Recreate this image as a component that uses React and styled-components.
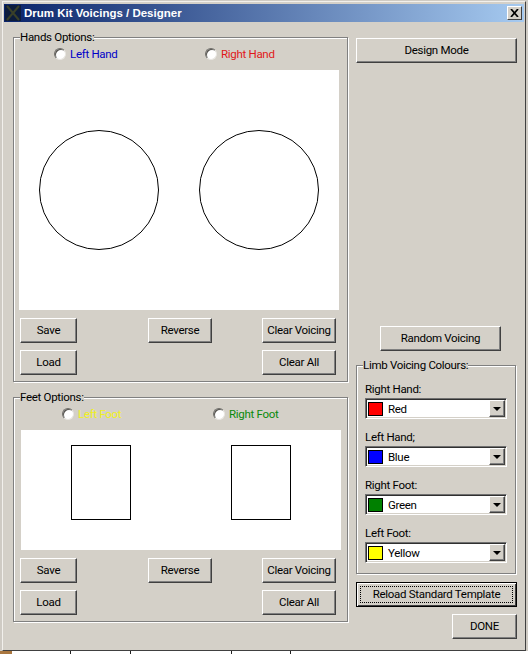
import React from 'react';
import styled, { createGlobalStyle } from 'styled-components';

const GlobalStyle = createGlobalStyle`
  html, body {
    margin: 0;
    padding: 0;
    background: #d4d0c8;
  }
  body {
    font-family: Roboto, "Liberation Sans", Arial, sans-serif;
    font-size: 11.5px;
    letter-spacing: -0.3px;
    color: #000;
  }
`;

const Page = styled.div`
  width: 528px;
  height: 654px;
  overflow: hidden;
  background: #cfcbc4;
  padding-top: 1px;
  box-sizing: border-box;
`;

const Window = styled.div`
  width: 524px;
  height: 650px;
  margin-left: 2px;
  box-sizing: border-box;
  padding: 2px 1px;
  background: #d4d0c8;
  border: 1px solid;
  border-color: #f2f0ec #404040 #404040 #f2f0ec;
`;

const TitleBar = styled.div`
  height: 18px;
  display: flex;
  align-items: center;
  background: linear-gradient(90deg, #0a246a, #a6caf0);
  color: #fff;
  font-family: "Liberation Sans", Arial, sans-serif;
  font-weight: bold;
  font-size: 11.5px;
  letter-spacing: 0;
`;

const TitleIcon = styled.svg`
  width: 16px;
  height: 16px;
  margin: 0 3px 0 1px;
  flex: none;
`;

const TitleText = styled.span`
  flex: 1;
`;

const CloseBox = styled.div`
  width: 15px;
  height: 14px;
  margin-right: 2px;
  background: #d4d0c8;
  box-sizing: border-box;
  border: 1px solid;
  border-color: #fff #404040 #404040 #fff;
  display: flex;
  align-items: center;
  justify-content: center;
`;

const Body = styled.div`
  display: flex;
  gap: 8px;
  padding: 8px 0 0 9px;
`;

const LeftColumn = styled.div`
  width: 335px;
  display: flex;
  flex-direction: column;
  gap: 8px;
`;

const RightColumn = styled.div`
  width: 161px;
  display: flex;
  flex-direction: column;
  align-items: flex-start;
`;

const Group = styled.fieldset`
  margin: 0;
  padding: 0 0 ${p => p.$bottom ?? 6}px;
  min-width: 0;
  width: ${p => p.$width || '335px'};
  box-sizing: border-box;
  border: 1px solid #808080;
  box-shadow: inset 1px 1px 0 #fff, 1px 1px 0 #fff;
`;

const GroupTitle = styled.legend`
  margin-left: 6px;
  padding: 0;
  height: 14px;
  line-height: 14px;
  background: #d4d0c8;
`;

const RadioRow = styled.div`
  height: 26px;
  display: flex;
  align-items: flex-start;
  padding: 3px 0 0 ${p => p.$indent}px;
  box-sizing: border-box;
`;

const RadioOption = styled.label`
  flex: none;
  width: 151px;
  display: flex;
  align-items: center;
  gap: 4px;
  line-height: 14px;
  color: ${p => p.$color};
`;

const RadioDot = styled.input.attrs({ type: 'radio' })`
  appearance: none;
  margin: 0;
  width: 12px;
  height: 12px;
  border-radius: 50%;
  background: #fff;
  border: 1px solid;
  border-color: #6e6c68 #e8e6e2 #e8e6e2 #6e6c68;
  box-shadow: inset 1px 1px 0 #55534f;
  box-sizing: border-box;
`;

const Canvas = styled.svg`
  display: block;
  background: #fff;
  margin-left: ${p => p.$indent}px;
`;

const ButtonGrid = styled.div`
  display: grid;
  grid-template-columns: 128px 114px 74px;
  row-gap: 7px;
  margin: 8px 0 0 6px;
`;

const Button = styled.button`
  appearance: none;
  width: ${p => p.$width}px;
  height: 25px;
  padding: 0 0 2px;
  margin: ${p => p.$margin || 0};
  font: inherit;
  letter-spacing: inherit;
  color: #000;
  background: #d4d0c8;
  box-sizing: border-box;
  border: 1px solid;
  border-color: #fff #404040 #404040 #fff;
  box-shadow: inset -1px -1px 0 #808080;
  ${p => p.$column ? `grid-column: ${p.$column};` : ''}
`;

const DefaultButton = styled(Button)`
  position: relative;
  border: 1px solid #000;
  box-shadow: inset 1px 1px 0 #fff, inset -1px -1px 0 #404040;
  &::after {
    content: '';
    position: absolute;
    inset: 3px;
    border: 1px dotted #000;
  }
`;

const Field = styled.div`
  padding: 0 0 0 8px;
  margin-bottom: 1px;
`;

const FieldLabel = styled.div`
  height: 26px;
  padding-top: 10px;
  box-sizing: border-box;
  line-height: 14px;
`;

const Combo = styled.div`
  width: 142px;
  height: 21px;
  box-sizing: border-box;
  display: flex;
  align-items: center;
  background: #fff;
  border: 1px solid;
  border-color: #707070 #fff #fff #707070;
  box-shadow: inset 1px 1px 0 #303030, inset -1px -1px 0 #d4d0c8;
`;

const Swatch = styled.span`
  width: 15px;
  height: 14px;
  margin: 0 5px 0 2px;
  box-sizing: border-box;
  border: 1px solid #000;
  background: ${p => p.$color};
`;

const ComboText = styled.span`
  flex: 1;
`;

const ComboArrow = styled.span`
  width: 16px;
  height: 17px;
  margin-right: 1px;
  box-sizing: border-box;
  background: #d4d0c8;
  border: 1px solid;
  border-color: #fff #404040 #404040 #fff;
  box-shadow: inset -1px -1px 0 #808080;
  display: flex;
  align-items: center;
  justify-content: center;
  &::before {
    content: '';
    border-style: solid;
    border-width: 4px 4px 0;
    border-color: #000 transparent transparent;
  }
`;

const BottomStrip = styled.div`
  height: 3px;
  background:
    linear-gradient(#222, #222) 70px 0 / 1px 3px no-repeat,
    linear-gradient(#222, #222) 130px 0 / 1px 3px no-repeat,
    linear-gradient(#222, #222) 231px 0 / 1px 3px no-repeat,
    linear-gradient(#222, #222) 290px 0 / 1px 3px no-repeat,
    linear-gradient(#a9763f, #a9763f) 0 0 / 12px 3px no-repeat,
    #fff;
`;

function LimbCombo({ label, name, color }) {
  return (
    <Field>
      <FieldLabel>{label}</FieldLabel>
      <Combo>
        <Swatch $color={color} />
        <ComboText>{name}</ComboText>
        <ComboArrow />
      </Combo>
    </Field>
  );
}

function VoicingButtons() {
  return (
    <ButtonGrid>
      <Button $width={57}>Save</Button>
      <Button $width={64}>Reverse</Button>
      <Button $width={74}>Clear Voicing</Button>
      <Button $width={57}>Load</Button>
      <Button $width={74} $column={3}>Clear All</Button>
    </ButtonGrid>
  );
}

export default function App() {
  return (
    <Page>
      <GlobalStyle />
      <Window>
        <TitleBar>
          <TitleIcon viewBox="0 0 16 16">
            <rect width="16" height="16" fill="#0d1c3c" />
            <path d="M2 1 L14 15 M14 1 L2 15" stroke="#3a4028" strokeWidth="2" />
          </TitleIcon>
          <TitleText>Drum Kit Voicings / Designer</TitleText>
          <CloseBox>
            <svg width="9" height="8" viewBox="0 0 9 8">
              <path d="M1 0 L8 8 M8 0 L1 8" stroke="#000" strokeWidth="1.7" />
            </svg>
          </CloseBox>
        </TitleBar>
        <Body>
          <LeftColumn>
            <Group>
              <GroupTitle>Hands Options:</GroupTitle>
              <RadioRow $indent={40}>
                <RadioOption $color="#0000c8"><RadioDot name="hand" />Left Hand</RadioOption>
                <RadioOption $color="#e01818"><RadioDot name="hand" />Right Hand</RadioOption>
              </RadioRow>
              <Canvas $indent={5} width="320" height="240">
                <circle cx="80" cy="120" r="59.5" fill="none" stroke="#000" />
                <circle cx="240" cy="120" r="59.5" fill="none" stroke="#000" />
              </Canvas>
              <VoicingButtons />
            </Group>
            <Group>
              <GroupTitle>Feet Options:</GroupTitle>
              <RadioRow $indent={48}>
                <RadioOption $color="#f0f020"><RadioDot name="foot" />Left Foot</RadioOption>
                <RadioOption $color="#0a8a0a"><RadioDot name="foot" />Right Foot</RadioOption>
              </RadioRow>
              <Canvas $indent={7} width="320" height="120">
                <rect x="50.5" y="15.5" width="59" height="74" fill="none" stroke="#000" />
                <rect x="210.5" y="15.5" width="59" height="74" fill="none" stroke="#000" />
              </Canvas>
              <VoicingButtons />
            </Group>
          </LeftColumn>
          <RightColumn>
            <Button $width={161} $margin="8px 0 0">Design Mode</Button>
            <Button $width={121} $margin="263px 0 7px 24px">Random Voicing</Button>
            <Group $width="160px" $bottom={9}>
              <GroupTitle>Limb Voicing Colours:</GroupTitle>
              <LimbCombo label="Right Hand:" name="Red" color="#ff0000" />
              <LimbCombo label="Left Hand;" name="Blue" color="#0000ff" />
              <LimbCombo label="Right Foot:" name="Green" color="#008000" />
              <LimbCombo label="Left Foot:" name="Yellow" color="#ffff00" />
            </Group>
            <DefaultButton $width={161} $margin="8px 0 7px">Reload Standard Template</DefaultButton>
            <Button $width={65} $margin="0 0 0 96px">DONE</Button>
          </RightColumn>
        </Body>
      </Window>
      <BottomStrip />
    </Page>
  );
}
